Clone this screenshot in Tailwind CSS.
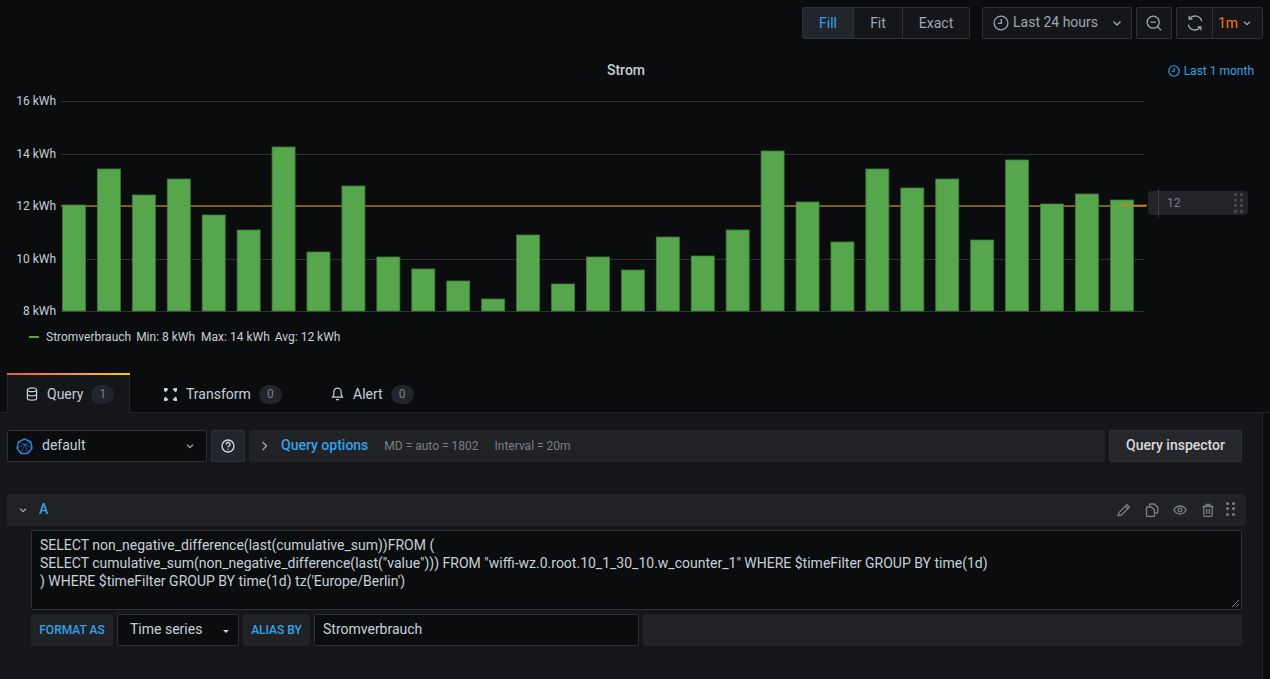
<!DOCTYPE html>
<html lang="en">
<head>
  <meta charset="utf-8">
  <title>Strom</title>
  <script src="https://cdn.jsdelivr.net/npm/@tailwindcss/browser@4"></script>
</head>
<body class="bg-[#0b0c0e] text-[#c7d0d9] font-['Roboto',sans-serif] text-sm overflow-hidden">
<div class="w-[1270px] h-[679px] flex flex-col overflow-hidden">

  <!-- Toolbar -->
  <header class="h-[39px] pt-[7px] pr-[7px] flex justify-end shrink-0">
    <div class="flex h-[32px] border border-[#2c3235] rounded-[2px] bg-[#141619] text-[#9fa7b3]">
      <div class="w-[50px] flex items-center justify-center bg-[#22252b] text-[#33a2e5]">Fill</div>
      <div class="w-[49px] flex items-center justify-center border-l border-[#2c3235]">Fit</div>
      <div class="w-[67px] flex items-center justify-center border-l border-[#2c3235]">Exact</div>
    </div>
    <div class="ml-3 w-[150px] h-[32px] flex items-center pl-[10px] border border-[#2c3235] rounded-[2px] bg-[#141619] text-[#9fa7b3]">
      <svg class="w-4 h-4" viewBox="0 0 16 16" fill="none" stroke="#9fa7b3" stroke-width="1.3"><circle cx="8" cy="8" r="6.9"/><path d="M8.3 4v4.3H4.8"/></svg>
      <span class="ml-[4px] pb-[2px]">Last 24 hours</span>
      <svg class="w-3 h-3 ml-auto mr-[8px]" viewBox="0 0 12 12" fill="none" stroke="#9fa7b3" stroke-width="1.4"><path d="M2.5 4.5 6 8l3.5-3.5"/></svg>
    </div>
    <div class="ml-1 w-[36px] h-[32px] flex items-center justify-center border border-[#2c3235] rounded-[2px] bg-[#141619]">
      <svg class="w-4 h-4" viewBox="0 0 16 16" fill="none" stroke="#9fa7b3" stroke-width="1.3"><circle cx="7.2" cy="7.2" r="6"/><path d="M4.5 7.2h5.4M11.6 11.6l3.6 3.6"/></svg>
    </div>
    <div class="ml-1 w-[87px] h-[32px] flex border border-[#2c3235] rounded-[2px] bg-[#141619]">
      <div class="w-[35px] flex items-center justify-center">
        <svg class="w-4 h-4" viewBox="0 0 16 16" fill="none" stroke="#9fa7b3" stroke-width="1.3"><path d="M14.8 6.4A7 7 0 0 0 2.6 3.6M1.2 9.6a7 7 0 0 0 12.2 2.8"/><path d="M2.2.8v3.2h3.2M13.8 15.2V12h-3.2"/></svg>
      </div>
      <div class="flex-1 flex items-center border-l border-[#2c3235] pl-[5px] text-[#ff780a]">
        1m
        <svg class="w-[10px] h-[10px] ml-[4px]" viewBox="0 0 12 12" fill="none" stroke="#9fa7b3" stroke-width="1.5"><path d="M2.5 4.5 6 8l3.5-3.5"/></svg>
      </div>
    </div>
  </header>

  <!-- Panel -->
  <section class="relative h-[334px] shrink-0">
    <div class="relative h-[61px] flex items-center justify-center pr-[18px]">
      <h2 class="text-sm font-medium text-[#c7d0d9]">Strom</h2>
      <span class="absolute right-[16px] top-[24px] flex items-center gap-[4px] text-xs text-[#33a2e5]">
        <svg class="w-3 h-3" viewBox="0 0 12 12" fill="none" stroke="#33a2e5" stroke-width="1.1"><circle cx="6" cy="6" r="5.2"/><path d="M6.2 2.8v3.4H3.6"/></svg>
        Last 1 month
      </span>
    </div>

    <svg id="chart" class="absolute left-0 top-[51px] w-[1270px] h-[230px] font-['Roboto',sans-serif]" viewBox="0 90 1270 230"></svg>

    <!-- Threshold handle -->
    <div class="absolute left-[1148px] top-[152px] w-[100px] h-[24px] bg-[#222429] rounded-[4px] flex items-center pl-[19px] text-xs text-[#7b8087]">
      12
      <span class="absolute left-[10px] -top-[2px] h-[28px] w-px bg-[#3a3d42]"></span>
      <span class="absolute right-[5px] top-[2px] grid grid-cols-2 gap-x-[3px] gap-y-[2.5px]">
        <i class="block w-[3px] h-[3px] bg-[#44474c]"></i><i class="block w-[3px] h-[3px] bg-[#44474c]"></i>
        <i class="block w-[3px] h-[3px] bg-[#44474c]"></i><i class="block w-[3px] h-[3px] bg-[#44474c]"></i>
        <i class="block w-[3px] h-[3px] bg-[#44474c]"></i><i class="block w-[3px] h-[3px] bg-[#44474c]"></i>
        <i class="block w-[3px] h-[3px] bg-[#44474c]"></i><i class="block w-[3px] h-[3px] bg-[#44474c]"></i>
      </span>
    </div>

    <!-- Legend -->
    <div class="absolute left-[29px] top-[289px] flex items-center text-xs text-[#c7d0d9] h-[18px]">
      <span class="w-[10px] h-[2px] bg-[#56a64b] mr-[7px]"></span>
      <span>Stromverbrauch</span>
      <span class="ml-[5px]">Min: 8 kWh</span>
      <span class="ml-[6px]">Max: 14 kWh</span>
      <span class="ml-[5px]">Avg: 12 kWh</span>
    </div>
  </section>

  <!-- Tabs -->
  <nav class="h-[40px] flex pl-[7px] shrink-0 border-b border-[#22252b] relative z-10">
    <div class="w-[123px] h-[40px] bg-[#141619] border-x border-[#22252b] flex items-center pl-[17px] pt-[2px] relative">
      <span class="absolute -left-px -right-px top-0 h-[2px] bg-gradient-to-r from-[#f05a28] to-[#fbca0a]"></span>
      <svg class="w-[14px] h-[14px]" viewBox="0 0 14 14" fill="none" stroke="#c7d0d9" stroke-width="1.2"><ellipse cx="7" cy="2.8" rx="4.6" ry="1.9"/><path d="M2.4 2.8v8.4c0 1 2 1.9 4.6 1.9s4.6-.9 4.6-1.9V2.8M2.4 7c0 1 2 1.9 4.6 1.9s4.6-.9 4.6-1.9"/></svg>
      <span class="ml-[8px]">Query</span>
      <span class="ml-[8px] w-[23px] h-[19px] rounded-full bg-[#22252b] text-xs text-[#7b8087] flex items-center justify-center">1</span>
    </div>
    <div class="w-[168px] h-[40px] flex items-center pl-[33px] pt-[2px]">
      <svg class="w-[15px] h-[15px]" viewBox="0 0 15 15" fill="none" stroke="#c7d0d9" stroke-width="1.2"><path d="M5 2.200c-1.200.300-2.300 1.200-2.800 2.800M10 2.200c1.200.300 2.300 1.200 2.800 2.800M5 12.800c-1.200-.300-2.300-1.200-2.800-2.800M10 12.800c1.200-.300 2.300-1.200 2.800-2.800"/><rect x="1" y="1" width="3.200" height="3.200" fill="#c7d0d9" stroke="none"/><rect x="10.800" y="1" width="3.200" height="3.200" fill="#c7d0d9" stroke="none"/><rect x="1" y="10.800" width="3.200" height="3.200" fill="#c7d0d9" stroke="none"/><rect x="10.800" y="10.800" width="3.200" height="3.200" fill="#c7d0d9" stroke="none"/></svg>
      <span class="ml-[8px]">Transform</span>
      <span class="ml-[8px] w-[23px] h-[19px] rounded-full bg-[#22252b] text-xs text-[#7b8087] flex items-center justify-center">0</span>
    </div>
    <div class="h-[40px] flex items-center pl-[33px] pt-[2px]">
      <svg class="w-[13px] h-[14px]" viewBox="0 0 13 14" fill="none" stroke="#c7d0d9" stroke-width="1.2"><path d="M6.500 1.200a3.700 3.700 0 0 0-3.700 3.700v3L1.500 10.200h10L10.200 7.900v-3A3.700 3.700 0 0 0 6.500 1.200zM5 12.600h3"/></svg>
      <span class="ml-[9px]">Alert</span>
      <span class="ml-[8px] w-[23px] h-[19px] rounded-full bg-[#22252b] text-xs text-[#7b8087] flex items-center justify-center">0</span>
    </div>
  </nav>

  <!-- Query editor -->
  <main class="w-[1263px] flex-1 bg-[#141619] border-r border-[#22252b] pt-[17px] pl-[7px] pr-[20px]">
    <div class="flex h-[32px] gap-[4px]">
      <div class="w-[200px] flex items-center pl-[8px] pr-[11px] bg-[#0b0c0e] border border-[#2c3235] rounded-[2px]">
        <svg class="w-[17px] h-[17px]" viewBox="0 0 17 17" fill="none" stroke="#2f82e0" stroke-width="1.2"><path d="M8.500 1 14.800 3.800 16 10.300 11.700 15.500 5 15.500 1 10 2.600 3.700Z" stroke-width="1.500"/><path d="M2.600 3.700 9 6.500 14.800 3.800M9 6.500 5 15.500M9 6.500 11.700 15.500M1 10 9 6.500 16 10.300" stroke-width=".6"/></svg>
        <span class="ml-[9px] pb-[2px]">default</span>
        <svg class="w-[10px] h-[10px] ml-auto" viewBox="0 0 12 12" fill="none" stroke="#9fa7b3" stroke-width="1.5"><path d="M2.500 4.500 6 8l3.500-3.500"/></svg>
      </div>
      <div class="w-[34px] flex items-center justify-center bg-[#22252b] border border-[#2c3235] rounded-[2px]">
        <svg class="w-[14px] h-[14px]" viewBox="0 0 14 14" fill="none" stroke="#d8d9da" stroke-width="1.3"><circle cx="7" cy="7" r="6"/><path d="M5.200 5.400a1.900 1.900 0 1 1 2.700 1.700c-.6.300-.9.600-.9 1.100"/><path d="M7 9.700v1"/></svg>
      </div>
      <div class="w-[856px] flex items-center pl-[12px] bg-[#202226] rounded-[2px]">
        <svg class="w-[8px] h-[10px]" viewBox="0 0 8 10" fill="none" stroke="#9fa7b3" stroke-width="1.300"><path d="M1.500 1 5.500 5l-4 4"/></svg>
        <span class="ml-[12px] pb-[2px] text-[#33a2e5] font-medium">Query options</span>
        <span class="ml-[16px] text-xs text-[#7b8087]">MD = auto = 1802</span>
        <span class="ml-[16px] text-xs text-[#7b8087]">Interval = 20m</span>
      </div>
      <div class="w-[133px] flex items-center justify-center pb-[2px] bg-[#25272c] border border-[#2c3235] rounded-[2px] font-medium text-[#d8d9da]">Query inspector</div>
    </div>

    <div class="mt-[32px] w-[1239px] h-[32px] flex items-center bg-[#202226] rounded-[2px] pl-[11px] pr-[11px]">
      <svg class="w-[10px] h-[10px]" viewBox="0 0 12 12" fill="none" stroke="#9fa7b3" stroke-width="1.500"><path d="M2.500 4.500 6 8l3.500-3.500"/></svg>
      <span class="ml-[11px] pb-[2px] text-[#33a2e5] font-medium">A</span>
      <span class="ml-auto flex items-center gap-[14px]">
        <svg class="w-[14px] h-[14px]" viewBox="0 0 14 14" fill="none" stroke="#7b8087" stroke-width="1.300"><path d="M1.200 12.800 2 9.500 9.800 1.700l2.500 2.500L4.500 12Z"/><path d="M8.300 3.200l2.500 2.500"/></svg>
        <svg class="w-[14px] h-[14px]" viewBox="0 0 14 14" fill="none" stroke="#7b8087" stroke-width="1.300"><path d="M4.500 3.500V2a1 1 0 0 1 1-1h3.800l3.500 3.500V9a1 1 0 0 1-1 1h-1.500"/><path d="M1.500 5a1 1 0 0 1 1-1h4l3 3v5.500a1 1 0 0 1-1 1h-6a1 1 0 0 1-1-1Z"/></svg>
        <svg class="w-[14px] h-[14px]" viewBox="0 0 14 14" fill="none" stroke="#7b8087" stroke-width="1.300"><path d="M.800 7c1.600-2.700 3.700-4 6.200-4s4.600 1.300 6.200 4c-1.600 2.700-3.700 4-6.200 4S2.400 9.700.800 7Z"/><circle cx="7" cy="7" r="1.800"/></svg>
        <svg class="w-[14px] h-[14px]" viewBox="0 0 14 14" fill="none" stroke="#7b8087" stroke-width="1.300"><path d="M1.500 3.500h11M5 3.500V1.500h4v2M2.800 3.500v8.800a1 1 0 0 0 1 1h6.400a1 1 0 0 0 1-1V3.500M5.700 6v5M8.300 6v5"/></svg>
        <span class="grid grid-cols-2 gap-x-[3px] gap-y-[2.500px] -mt-[3px] -ml-[3px]">
          <i class="block w-[3px] h-[3px] rounded-full bg-[#7b8087]"></i><i class="block w-[3px] h-[3px] rounded-full bg-[#7b8087]"></i>
          <i class="block w-[3px] h-[3px] rounded-full bg-[#7b8087]"></i><i class="block w-[3px] h-[3px] rounded-full bg-[#7b8087]"></i>
          <i class="block w-[3px] h-[3px] rounded-full bg-[#7b8087]"></i><i class="block w-[3px] h-[3px] rounded-full bg-[#7b8087]"></i>
        </span>
      </span>
    </div>

    <div class="ml-[24px] mt-[4px] w-[1211px] h-[80px] relative bg-[#0b0c0e] border border-[#2c3235] rounded-[2px] px-[8px] pt-[5px] leading-[18px] text-[#c7d0d9] whitespace-pre">SELECT non_negative_difference(last(cumulative_sum))FROM (
SELECT cumulative_sum(non_negative_difference(last("value"))) FROM "wiffi-wz.0.root.10_1_30_10.w_counter_1" WHERE $timeFilter GROUP BY time(1d)
) WHERE $timeFilter GROUP BY time(1d) tz('Europe/Berlin')<svg class="absolute right-[1px] bottom-[1px] w-[10px] h-[10px]" viewBox="0 0 10 10" stroke="#7b8087" stroke-width="1"><path d="M9 2 2 9M9 6 6 9"/></svg></div>

    <div class="ml-[24px] mt-[4px] h-[32px] w-[1211px] flex gap-[4px]">
      <div class="w-[82px] flex items-center justify-center bg-[#202226] rounded-[2px] text-xs font-medium text-[#33a2e5]">FORMAT AS</div>
      <div class="w-[122px] flex items-center pl-[12px] bg-[#0b0c0e] border border-[#2c3235] rounded-[2px]">
        <span class="pb-[2px]">Time series</span>
        <span class="ml-auto mr-[9px] mt-[2px] w-0 h-0 border-x-[3.500px] border-x-transparent border-t-[3.500px] border-t-[#c7d0d9]"></span>
      </div>
      <div class="w-[67px] flex items-center justify-center bg-[#202226] rounded-[2px] text-xs font-medium text-[#33a2e5]">ALIAS BY</div>
      <div class="w-[325px] flex items-center pl-[8px] pb-[2px] bg-[#0b0c0e] border border-[#2c3235] rounded-[2px]">Stromverbrauch</div>
      <div class="flex-1 bg-[#202226] rounded-[2px]"></div>
    </div>
  </main>
</div>

<script>
  // bar tops in page pixels, one per day
  const tops = [205,169,195,179,215,230,147,252,186,257,269,281,299,235,284,257,270,237,256,230,151,202,242,169,188,179,240,160,204,194,200];
  const axis = [[101,"16 kWh"],[154,"14 kWh"],[206,"12 kWh"],[259,"10 kWh"],[311,"8 kWh"]];
  let s = "";
  axis.forEach(([y, label]) => {
    s += `<line x1="61" x2="1144" y1="${y}.5" y2="${y}.5" stroke="#2f3135"/>`;
    s += `<text x="56" y="${y + 4}" text-anchor="end" font-size="12" fill="#c7d0d9">${label}</text>`;
  });
  s += `<line x1="61" x2="1146" y1="206" y2="206" stroke="#a0722a" stroke-width="1.500"/>`;
  tops.forEach((t, i) => {
    const x = 62.5 + i * 34.93;
    s += `<rect x="${x}" y="${t}" width="23" height="${311 - t}" fill="#56a64b" stroke="#3f7a39" stroke-width=".8"/>`;
  });
  s += `<line x1="1119" x2="1147" y1="205.500" y2="205.500" stroke="#c4862a" stroke-width="1.500"/>`;
  document.getElementById("chart").innerHTML = s;
</script>
</body>
</html>
